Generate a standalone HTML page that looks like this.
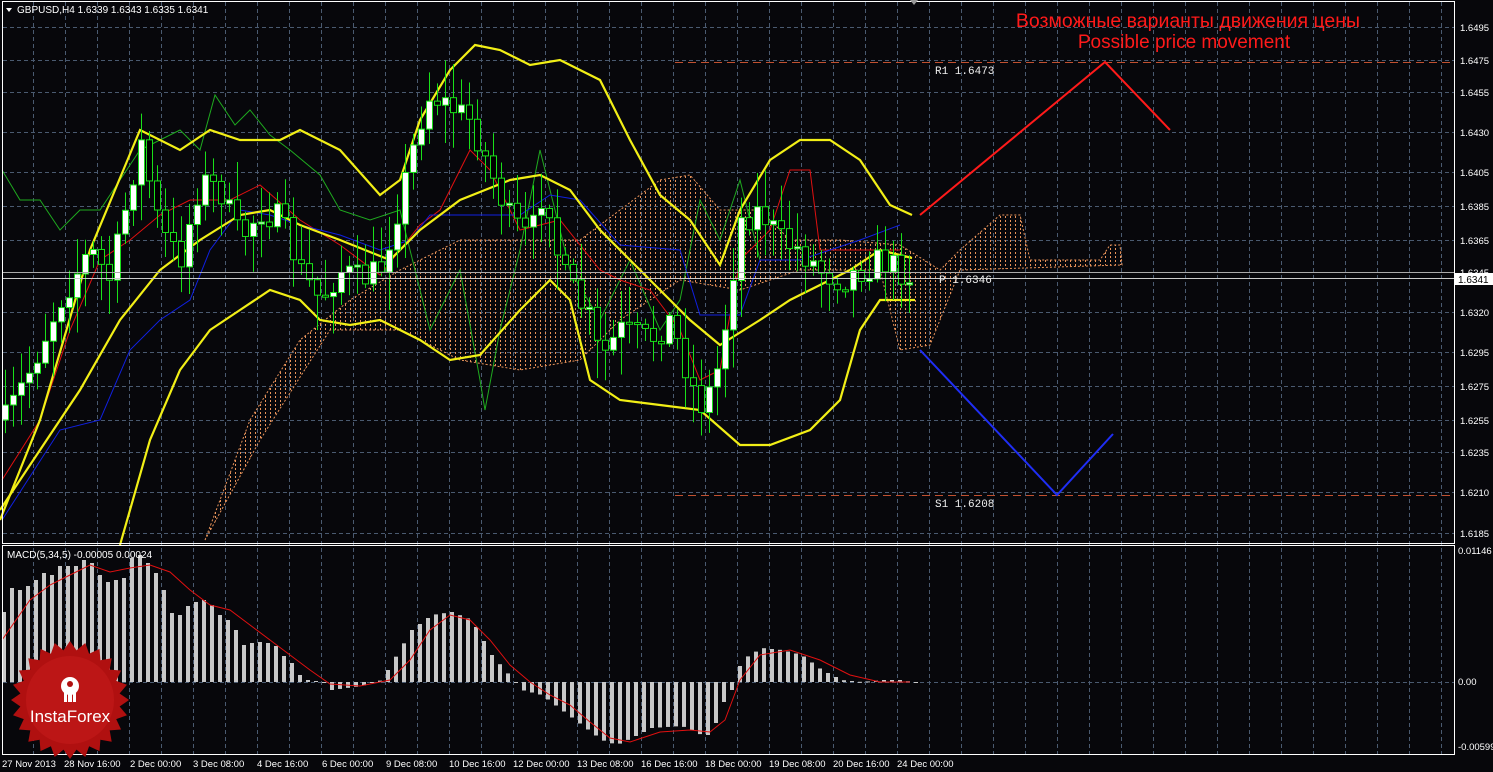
<!DOCTYPE html>
<html><head><meta charset="utf-8"><style>
html,body{margin:0;padding:0;background:#07070b;width:1493px;height:772px;overflow:hidden}
svg{display:block}
text{font-family:"Liberation Sans",sans-serif}
</style></head><body>
<svg id="s" width="1493" height="772" xmlns="http://www.w3.org/2000/svg">
<defs>
<pattern id="dots" width="5" height="4" patternUnits="userSpaceOnUse"><rect x="0" y="0" width="1" height="2" fill="#e8935a"/></pattern>
</defs>
<rect width="1493" height="772" fill="#07070b"/>
<g id="grid"></g>
<polygon id="cloud" fill="url(#dots)" stroke="#e8935a" stroke-width="1" stroke-dasharray="2,2"/>
<g id="lines"></g>
<g id="candles"></g>
<g id="macd"></g>
<rect x="2.5" y="1.5" width="1452" height="542" fill="none" stroke="#fff" stroke-width="1"/>
<rect x="2.5" y="545.5" width="1452" height="209" fill="none" stroke="#fff" stroke-width="1"/>
<line x1="3" y1="272.5" x2="1454" y2="272.5" stroke="#aaa" stroke-width="1"/>
<line x1="3" y1="278.5" x2="1454" y2="278.5" stroke="#ccc" stroke-width="1"/>
<rect x="1455" y="273" width="38" height="12" fill="#fff"/>
<text x="1458" y="283" font-size="10" fill="#000">1.6341</text>
<line x1="675" y1="62.5" x2="1454" y2="62.5" stroke="#c05030" stroke-dasharray="8,5"/>
<line x1="675" y1="495.5" x2="1454" y2="495.5" stroke="#c05030" stroke-dasharray="8,5"/>
<text x="935" y="74" font-size="11" fill="#eee" style="font-family:'Liberation Mono',monospace">R1 1.6473</text>
<text x="935" y="507" font-size="11" fill="#eee" style="font-family:'Liberation Mono',monospace">S1 1.6208</text>
<text x="939" y="283" font-size="11" fill="#eee" style="font-family:'Liberation Mono',monospace">P 1.6346</text>
<polyline points="920,215 1105,62 1170,130" fill="none" stroke="#ff1a1a" stroke-width="2"/>
<polyline points="920,350 1057,495 1113,434" fill="none" stroke="#1f2ef5" stroke-width="2"/>
<text x="1188" y="27" font-size="19.5" fill="#ff1a1a" text-anchor="middle">Возможные варианты движения цены</text>
<text x="1184" y="48" font-size="19" fill="#ff1a1a" text-anchor="middle">Possible price movement</text>
<polygon points="6,8 12,8 9,12" fill="#fff"/>
<text x="17" y="13" font-size="10" fill="#fff">GBPUSD,H4  1.6339 1.6343 1.6335 1.6341</text>
<polygon points="910,0 918,0 914,5" fill="#999"/>
<text x="7" y="558" font-size="10" fill="#fff">MACD(5,34,5) -0.00005 0.00024</text>
<g id="axis" font-size="9.5" fill="#fff"></g>
<g transform="translate(70,700)">
<polygon id="star" fill="#b01010"/>
<circle r="44" fill="#c41a1a" opacity="0.6"/>
<g fill="#fff"><circle cx="0" cy="-14" r="9"/><rect x="-2" y="-14" width="4" height="16"/><rect x="-6" y="-8" width="3" height="10"/><rect x="3" y="-8" width="3" height="10"/></g>
<circle cx="0" cy="-16" r="3" fill="#b01010"/>
<text x="0" y="22" font-size="17" fill="#fff" text-anchor="middle">InstaForex</text>
</g>
</svg>
<script>
const NS="http://www.w3.org/2000/svg";
function el(p,t,a){const e=document.createElementNS(NS,t);for(const k in a)e.setAttribute(k,a[k]);document.getElementById(p).appendChild(e);return e}
function interp(pts,x){for(let i=0;i<pts.length-1;i++){if(x>=pts[i][0]&&x<=pts[i+1][0]){const t=(x-pts[i][0])/(pts[i+1][0]-pts[i][0]);return pts[i][1]+t*(pts[i+1][1]-pts[i][1])}}return pts[pts.length-1][1]}
for(let x=33;x<1454;x+=32)el("grid","line",{x1:x+.5,y1:2,x2:x+.5,y2:754,stroke:"#4a5a70","stroke-dasharray":"4,3"});
const prices=[["1.6495",27],["1.6475",60],["1.6455",92],["1.6430",132],["1.6405",172],["1.6385",206],["1.6365",240],["1.6345",272],["1.6320",312],["1.6295",352],["1.6275",386],["1.6255",420],["1.6235",452],["1.6210",492],["1.6185",533]];
prices.forEach(p=>{if(p[1]!=272)el("grid","line",{x1:3,y1:p[1]+.5,x2:1454,y2:p[1]+.5,stroke:"#4a5a70","stroke-dasharray":"4,3"});const t=el("axis","text",{x:1460,y:p[1]+4});t.textContent=p[0]});
el("grid","line",{x1:3,y1:682.5,x2:1454,y2:682.5,stroke:"#4a5a70","stroke-dasharray":"4,3"});
[["0.01146",554],["0.00",685],["-0.00599",750]].forEach(p=>{const t=el("axis","text",{x:1458,y:p[1]});t.textContent=p[0]});
[["27 Nov 2013",2],["28 Nov 16:00",64],["2 Dec 00:00",130],["3 Dec 08:00",193],["4 Dec 16:00",257],["6 Dec 00:00",322],["9 Dec 08:00",386],["10 Dec 16:00",449],["12 Dec 00:00",513],["13 Dec 08:00",577],["16 Dec 16:00",641],["18 Dec 00:00",705],["19 Dec 08:00",769],["20 Dec 16:00",833],["24 Dec 00:00",897]].forEach(p=>{const t=el("axis","text",{x:p[1],y:767});t.textContent=p[0]});
const up=[[205,540],[250,420],[300,340],[350,300],[400,270],[460,240],[520,240],[580,240],[620,210],[660,180],[690,175],[720,210],[760,210],[790,240],[840,240],[900,245],[940,270],[960,250],[1000,215],[1020,215],[1030,260],[1100,260],[1110,245],[1120,245],[1122,265]];
const lo=[[205,540],[260,440],[330,330],[400,330],[460,360],[520,370],[580,360],[620,320],[680,280],[740,290],[800,270],[880,270],[900,350],[930,345],[960,270],[1122,265]];
document.getElementById("cloud").setAttribute("points",up.concat(lo.slice().reverse()).map(p=>p.join(",")).join(" "));
function pl(pts,c,w){el("lines","polyline",{points:pts.map(p=>p.join(",")).join(" "),fill:"none",stroke:c,"stroke-width":w})}
pl([[2,170],[20,200],[40,200],[60,230],[80,210],[100,210],[120,180],[140,150],[160,140],[180,130],[200,150],[215,95],[235,125],[250,110],[270,135],[290,150],[320,175],[340,210],[370,220],[400,210],[430,330],[460,270],[480,380],[485,410],[500,330],[520,250],[540,150],[570,270],[600,320],[630,260],[660,330],[680,300],[700,200],[720,240],[740,180],[760,260]],"#1faa1f",1);
pl([[2,480],[40,420],[70,330],[100,260],[130,240],[160,215],[190,200],[230,200],[260,185],[300,220],[340,245],[380,275],[420,225],[440,210],[470,150],[490,170],[520,230],[560,220],[600,270],[620,280],[650,290],[680,330],[700,380],[720,370],[740,260],[770,230],[790,170],[810,170],[820,250],[860,250],[900,250]],"#e01010",1);
pl([[2,520],[60,430],[100,420],[130,350],[160,320],[190,300],[210,250],[240,210],[270,215],[300,225],[340,235],[380,250],[410,240],[430,215],[520,215],[550,195],[580,200],[620,245],[680,250],[700,315],[740,315],[760,260],[800,260],[860,240],[900,225]],"#1020e0",1);
pl([[0,520],[40,420],[90,250],[140,130],[180,150],[210,130],[240,140],[280,140],[300,130],[340,150],[380,195],[400,180],[420,120],[450,70],[475,45],[500,50],[530,65],[560,60],[600,80],[630,140],[660,195],[690,220],[720,265],[740,210],[770,160],[800,140],[830,140],[860,160],[890,205],[912,215]],"#f2ef16",2.2);
pl([[0,510],[40,450],[80,390],[120,320],[160,270],[200,240],[240,215],[270,210],[300,225],[340,240],[390,260],[420,230],[460,200],[510,180],[540,175],[570,190],[600,230],[630,260],[660,290],[690,320],[720,345],[760,320],[790,300],[820,285],[850,270],[880,250],[912,258]],"#f2ef16",2.2);
pl([[120,545],[150,440],[180,370],[210,330],[240,310],[270,290],[300,300],[320,320],[350,325],[380,320],[420,340],[450,360],[480,355],[520,310],[550,280],[570,300],[590,380],[620,400],[660,405],[700,410],[740,445],[770,445],[810,430],[840,400],[860,330],[880,300],[915,300]],"#f2ef16",2.2);
const cp=[[5,420],[30,370],[60,300],[90,250],[110,280],[140,140],[160,230],[180,260],[200,180],[220,190],[240,240],[260,210],[280,220],[300,270],[320,300],[340,270],[360,280],[380,270],[400,200],[420,120],[430,95],[440,100],[470,120],[490,170],[510,220],[530,240],[545,180],[560,270],[590,320],[600,360],[620,330],[650,340],[670,320],[690,380],[700,405],[710,390],[720,360],[740,220],[760,210],[780,240],[800,250],[820,270],[840,280],[860,270],[880,260],[900,270],[910,275]];
let seed=7;function r(){seed=(seed*16807)%2147483647;return seed/2147483647}
let prev=interp(cp,5);
for(let x=5;x<=910;x+=8){
 const c=interp(cp,x)+(r()-0.5)*30, o=prev; prev=c;
 const hi=Math.min(o,c)-r()*35-3, lo2=Math.max(o,c)+r()*35+3;
 el("candles","line",{x1:x+.5,y1:hi,x2:x+.5,y2:lo2,stroke:"#19e019","stroke-width":1});
 const top=Math.min(o,c),h=Math.max(2,Math.abs(o-c));
 el("candles","rect",{x:x-2.5,y:top,width:6,height:h,fill:c<o?"#fff":"#000",stroke:"#19e019","stroke-width":1});
}
const mp=[[2,612],[10,588],[18,590],[26,586],[34,580],[42,573],[50,575],[58,566],[66,566],[74,566],[82,560],[90,563],[98,575],[106,582],[114,580],[122,578],[130,558],[138,555],[146,563],[154,573],[162,590],[170,613],[178,615],[186,606],[194,602],[202,600],[210,605],[218,615],[226,620],[234,630],[242,645],[250,643],[258,642],[266,643],[274,646],[282,656],[290,663],[298,675],[306,680],[314,681],[322,682],[330,690],[360,686],[380,680],[410,630],[430,615],[450,612],[470,620],[490,655],[510,678],[520,690],[540,695],[560,710],[580,725],[600,740],[615,745],[630,738],[650,728],[680,726],[700,735],[710,735],[720,705],[730,690],[740,660],[760,648],[780,650],[800,655],[820,670],[840,680],[860,682],[880,680],[900,680],[910,682]];
for(let x=2;x<=914;x+=8){const y=interp(mp,x);el("macd","rect",{x:x,y:Math.min(y,682),width:4,height:Math.max(1,Math.abs(682-y)),fill:"#c8c8c8"})}
const sp=[[2,640],[30,600],[50,585],[70,575],[90,565],[110,572],[130,568],[150,565],[170,572],[190,590],[210,605],[230,610],[250,625],[270,640],[290,655],[310,670],[330,684],[360,686],[390,680],[410,660],[430,630],[450,615],[470,620],[490,640],[510,665],[530,682],[550,695],[570,705],[590,722],[610,738],[630,742],[660,732],[690,730],[710,732],[725,720],[740,680],[760,655],[790,650],[820,660],[850,675],[880,682],[910,682]];
el("macd","polyline",{points:sp.map(p=>p.join(",")).join(" "),fill:"none",stroke:"#e01010","stroke-width":1});
let sp2=[];for(let i=0;i<48;i++){const a=i*Math.PI/24,R=i%2?50:59;sp2.push((R*Math.cos(a)).toFixed(1)+","+(R*Math.sin(a)).toFixed(1))}
document.getElementById("star").setAttribute("points",sp2.join(" "));
</script>
</body></html>
